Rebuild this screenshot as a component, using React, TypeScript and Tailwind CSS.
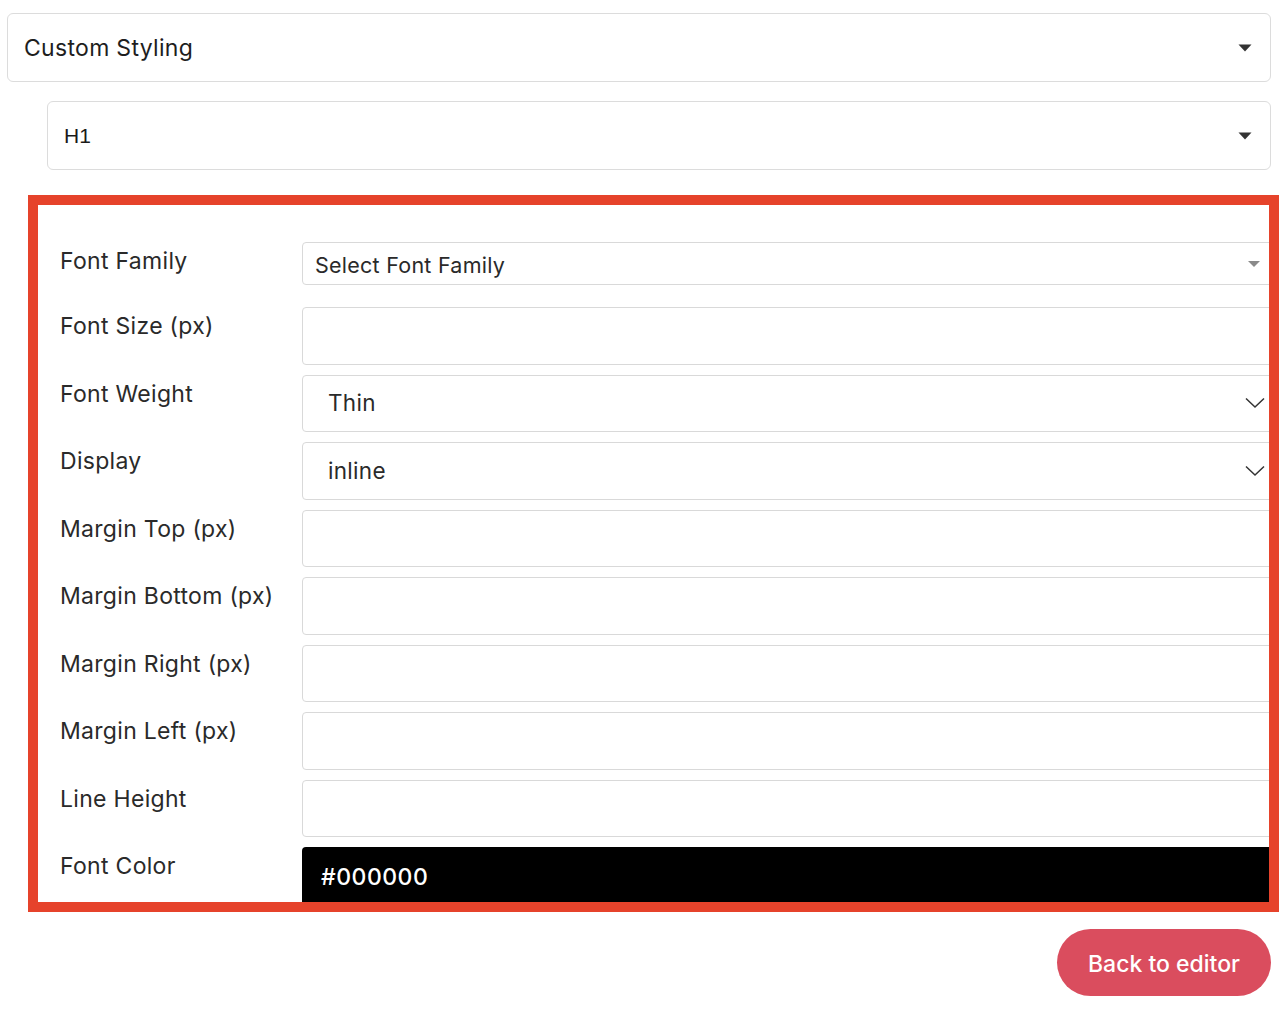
import React from "react";

const Caret = () => (
  <svg width="14" height="8" viewBox="0 0 14 8" className="shrink-0">
    <path d="M0.5 0.5 L13.5 0.5 L7 7.5 Z" fill="#333" />
  </svg>
);

const SmallCaret = () => (
  <svg width="12" height="6" viewBox="0 0 12 6" className="shrink-0">
    <path d="M0 0 L12 0 L6 6 Z" fill="#8a8a8a" />
  </svg>
);

const Chevron = () => (
  <svg width="20" height="12" viewBox="0 0 20 12" className="shrink-0">
    <path d="M1 1.5 L10 10 L19 1.5" fill="none" stroke="#333" strokeWidth="1.5" />
  </svg>
);

const Label = ({ children }: { children: React.ReactNode }) => (
  <div className="w-[242px] shrink-0 pt-[6px] text-[23px] tracking-[0.3px] leading-[26px] text-[#2a2a2a]">{children}</div>
);

const EmptyInput = () => (
  <div className="flex-1 h-[57.5px] mr-[-20px] rounded-[4px] border border-[#d9d9d9] bg-white" />
);

const Row = ({ label, children }: { label: string; children: React.ReactNode }) => (
  <div className="flex items-start mb-[10px]">
    <Label>{label}</Label>
    {children}
  </div>
);

export default function App() {
  const empties = ["Margin Top (px)", "Margin Bottom (px)", "Margin Right (px)", "Margin Left (px)", "Line Height"];
  return (
    <div className="min-h-screen bg-white pt-[13px] font-[Inter,sans-serif]">
      <div className="ml-[7px] mr-[9px] h-[69px] rounded-[6px] border border-[#dcdcdc] flex items-center justify-between pl-[16px] pr-[18px]">
        <span className="text-[23px] tracking-[0.3px] text-[#1e1e1e] pt-[2px]">Custom Styling</span>
        <Caret />
      </div>
      <div className="ml-[47px] mr-[9px] mt-[19px] h-[69px] rounded-[6px] border border-[#dcdcdc] flex items-center justify-between pl-[16px] pr-[18px]">
        <span className="text-[21px] text-[#1a1a1a] font-['Liberation_Sans',Arial,sans-serif]">H1</span>
        <Caret />
      </div>

      <div className="ml-[28px] mr-[1px] mt-[25px] h-[717px] border-[10px] border-[#e6432b] overflow-hidden pl-[22px] pt-[37px]">
        <div className="flex items-start mb-[22px]">
          <Label>Font Family</Label>
          <div className="flex-1 h-[43px] mr-[-20px] rounded-[4px] border border-[#d9d9d9] bg-white flex items-center pl-[12px] pr-[28px] justify-between">
            <span className="text-[21.5px] tracking-[0.25px] text-[#2a2a2a] pt-[4px]">Select Font Family</span>
            <SmallCaret />
          </div>
        </div>
        <Row label="Font Size (px)">
          <EmptyInput />
        </Row>
        <Row label="Font Weight">
          <div className="flex-1 h-[57.5px] mr-[-20px] rounded-[4px] border border-[#d9d9d9] bg-white flex items-center justify-between pl-[25px] pr-[23px]">
            <span className="text-[22.5px] tracking-[0.3px] text-[#2a2a2a]">Thin</span>
            <Chevron />
          </div>
        </Row>
        <Row label="Display">
          <div className="flex-1 h-[57.5px] mr-[-20px] rounded-[4px] border border-[#d9d9d9] bg-white flex items-center justify-between pl-[25px] pr-[23px]">
            <span className="text-[22.5px] tracking-[0.3px] text-[#2a2a2a]">inline</span>
            <Chevron />
          </div>
        </Row>
        {empties.map((l) => (
          <Row key={l} label={l}>
            <EmptyInput />
          </Row>
        ))}
        <Row label="Font Color">
          <div className="flex-1 h-[57.5px] mr-[-20px] rounded-[4px] bg-black flex items-center pl-[19px] pt-[3px]">
            <span className="text-[23px] tracking-[0.5px] font-medium text-white">#000000</span>
          </div>
        </Row>
      </div>

      <div className="flex justify-end mr-[9px] mt-[17px]">
        <button className="h-[67px] w-[214px] rounded-full bg-[#da4d5e] text-white text-[23px] font-medium pt-[3px]">
          Back to editor
        </button>
      </div>
    </div>
  );
}
